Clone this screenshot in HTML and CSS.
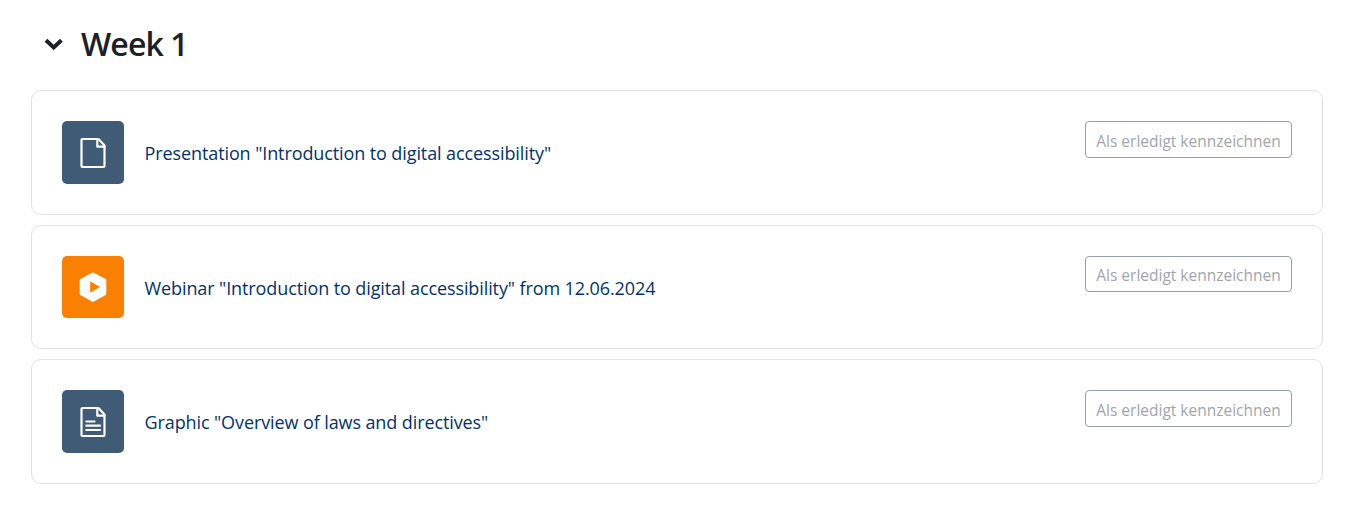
FILE: index.html
```html
<!DOCTYPE html>
<html lang="de">
<head>
    <meta charset="UTF-8">
    <meta name="viewport" content="width=device-width, initial-scale=1.0">
    <title>Week 1</title>
    <link rel="stylesheet" href="styles.css">
</head>
<body>
    <section class="course-section">
        <div class="section-header">
            <svg class="chevron" viewBox="0 0 20 12" aria-hidden="true">
                <path d="M2 2.3 L9.7 9.4 L17.4 2.3"/>
            </svg>
            <h3>Week 1</h3>
        </div>

        <ul class="activity-list">
            <li class="activity">
                <div class="activity-icon">
                    <svg viewBox="0 0 62 62" aria-hidden="true">
                        <path d="M20.5 18 H36.5 L42.5 24.5 V45 Q42.5 46 41.5 46 H20.5 Q19.5 46 19.5 45 V19 Q19.5 18 20.5 18 Z"/>
                        <path d="M35.3 18 V25.7 H42.5"/>
                    </svg>
                </div>
                <a class="activity-name" href="#">Presentation "Introduction to digital accessibility"</a>
                <button class="completion">Als erledigt kennzeichnen</button>
            </li>
            <li class="activity">
                <div class="activity-icon video">
                    <svg viewBox="0 0 62 62" aria-hidden="true">
                        <path class="hexagon" d="M31 18.5 L42.3 24.6 V37.4 L31 43.7 L19.7 37.4 V24.6 Z"/>
                        <path class="play" d="M28.2 25.3 L38 31 L28.2 36.7 Z"/>
                    </svg>
                </div>
                <a class="activity-name" href="#">Webinar "Introduction to digital accessibility" from 12.06.2024</a>
                <button class="completion">Als erledigt kennzeichnen</button>
            </li>
            <li class="activity">
                <div class="activity-icon">
                    <svg viewBox="0 0 62 62" aria-hidden="true">
                        <path d="M20.5 18 H36.5 L42.5 24.5 V45 Q42.5 46 41.5 46 H20.5 Q19.5 46 19.5 45 V19 Q19.5 18 20.5 18 Z"/>
                        <path d="M35.3 18 V25.7 H42.5"/>
                        <path d="M24.3 31.5 H32.5 M24.3 35.7 H38 M24.3 40 H38"/>
                    </svg>
                </div>
                <a class="activity-name" href="#">Graphic "Overview of laws and directives"</a>
                <button class="completion">Als erledigt kennzeichnen</button>
            </li>
        </ul>
    </section>
</body>
</html>
```

FILE: styles.css
```css
* {
    margin: 0;
    padding: 0;
    box-sizing: border-box;
}

body {
    font-family: 'Segoe UI', 'Open Sans', 'Noto Sans', sans-serif;
    background: #fff;
    color: #1d2125;
}

.course-section {
    padding: 22px 28px 0 31px;
}

.section-header {
    display: flex;
    align-items: center;
    height: 44px;
    padding-left: 13px;
    margin-bottom: 24.3px;
}

.chevron {
    width: 20px;
    height: 12px;
    margin-right: 17px;
    fill: none;
    stroke: #1d2125;
    stroke-width: 4;
}

h3 {
    font-size: 32px;
    line-height: 44px;
    font-weight: 600;
    letter-spacing: -0.9px;
}

.activity-list {
    display: flex;
    flex-direction: column;
    gap: 10px;
    list-style: none;
}

.activity {
    display: flex;
    align-items: center;
    padding: 30px;
    border: 1px solid #dee2e6;
    border-radius: 10px;
}

.activity-icon {
    width: 62px;
    height: 62.5px;
    margin-right: 20.5px;
    border-radius: 5px;
    background: #3f5b76;
}

.activity-icon.video {
    background: #f98000;
}

.activity-icon svg {
    display: block;
    width: 62px;
    height: 62px;
    fill: none;
    stroke: #fff;
    stroke-width: 2.2;
    stroke-linejoin: round;
    stroke-linecap: round;
}

.activity-icon .hexagon {
    fill: #fff;
    stroke-width: 4;
}

.activity-icon .play {
    fill: #f98000;
    stroke: none;
}

.activity-name {
    padding-top: 1.6px;
    font-size: 18px;
    line-height: 26px;
    letter-spacing: -0.1px;
    color: #003370;
    text-decoration: none;
    white-space: nowrap;
}

.completion {
    align-self: flex-start;
    width: 207px;
    height: 36.6px;
    margin-left: auto;
    padding-top: 2.7px;
    border: 1px solid #979ea4;
    border-radius: 4px;
    background: transparent;
    color: #a0a6ab;
    font-family: inherit;
    font-size: 15.5px;
    white-space: nowrap;
}
```
